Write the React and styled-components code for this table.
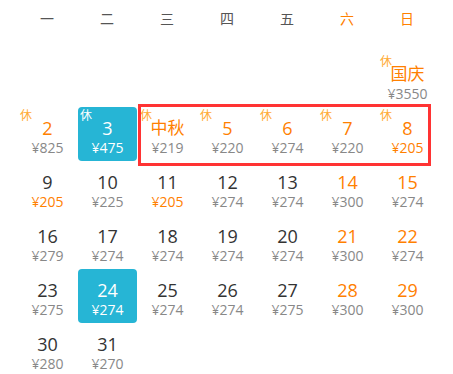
import React from 'react'
import styled, { createGlobalStyle } from 'styled-components'

const GlobalStyle = createGlobalStyle`
  body {
    margin: 0;
    background: #fff;
    font-family: "Open Sans", "Noto Sans CJK SC", sans-serif;
  }
`

const Wrapper = styled.div`
  position: relative;
  width: 453px;
  height: 374px;
  overflow: hidden;
  padding-left: 17px;
  box-sizing: border-box;
`
const WeekHead = styled.div`
  display: grid;
  grid-template-columns: repeat(7, 60px);
  height: 36px;
  margin-bottom: 17px;
`
const WeekDay = styled.div`
  text-align: center;
  line-height: 36px;
  font-size: 14px;
  font-family: "Noto Sans CJK SC", sans-serif;
  color: ${p => (p.$weekend ? '#ff8000' : '#555')};
`
const Grid = styled.div`
  display: grid;
  grid-template-columns: repeat(7, 60px);
  grid-auto-rows: 54px;
`
const Cell = styled.div`
  position: relative;
  margin-left: 1px;
  display: flex;
  flex-direction: column;
  align-items: center;
  padding-top: 9px;
  border-radius: 4px;
  background: ${p => (p.$selected ? '#26b5d5' : 'transparent')};
`
const Day = styled.div`
  font-size: 18px;
  line-height: 24px;
  color: ${p => (p.$selected ? '#fff' : p.$holiday ? '#ff8000' : '#333')};
`
const Label = styled(Day)`
  font-size: 17px;
  line-height: 22px;
  margin-bottom: 2px;
  font-family: "Noto Sans CJK SC", sans-serif;
`
const Price = styled.div`
  font-size: 14px;
  line-height: 16px;
  color: ${p => (p.$selected ? '#fff' : p.$low ? '#ff8000' : '#888')};
`
const Rest = styled.span`
  position: absolute;
  top: 1px;
  left: 2px;
  font-size: 12px;
  line-height: 14px;
  font-family: "Noto Sans CJK SC", sans-serif;
  color: ${p => (p.$selected ? '#fff' : '#ffaa33')};
`
const Highlight = styled.div`
  position: absolute;
  left: 138px;
  top: 104px;
  width: 293px;
  height: 62px;
  box-sizing: border-box;
  border: 3px solid #f33;
  pointer-events: none;
`

const week = ['一', '二', '三', '四', '五', '六', '日']

const days = [
  null, null, null, null, null, null,
  { label: '国庆', price: 3550, rest: true, holiday: true },
  { d: 2, price: 825, rest: true, holiday: true },
  { d: 3, price: 475, rest: true, selected: true },
  { label: '中秋', price: 219, rest: true, holiday: true },
  { d: 5, price: 220, rest: true, holiday: true },
  { d: 6, price: 274, rest: true, holiday: true },
  { d: 7, price: 220, rest: true, holiday: true },
  { d: 8, price: 205, rest: true, holiday: true, low: true },
  { d: 9, price: 205, low: true },
  { d: 10, price: 225 },
  { d: 11, price: 205, low: true },
  { d: 12, price: 274 },
  { d: 13, price: 274 },
  { d: 14, price: 300, holiday: true },
  { d: 15, price: 274, holiday: true },
  { d: 16, price: 279 },
  { d: 17, price: 274 },
  { d: 18, price: 274 },
  { d: 19, price: 274 },
  { d: 20, price: 274 },
  { d: 21, price: 300, holiday: true },
  { d: 22, price: 274, holiday: true },
  { d: 23, price: 275 },
  { d: 24, price: 274, selected: true },
  { d: 25, price: 274 },
  { d: 26, price: 274 },
  { d: 27, price: 275 },
  { d: 28, price: 300, holiday: true },
  { d: 29, price: 300, holiday: true },
  { d: 30, price: 280 },
  { d: 31, price: 270 },
]

const App = () => (
  <Wrapper>
    <GlobalStyle />
    <WeekHead>
      {week.map((w, i) => (
        <WeekDay key={w} $weekend={i > 4}>{w}</WeekDay>
      ))}
    </WeekHead>
    <Grid>
      {days.map((c, i) =>
        c ? (
          <Cell key={i} $selected={c.selected}>
            {c.rest && <Rest $selected={c.selected}>休</Rest>}
            {c.label
              ? <Label $holiday>{c.label}</Label>
              : <Day $holiday={c.holiday} $selected={c.selected}>{c.d}</Day>}
            <Price $low={c.low} $selected={c.selected}>¥{c.price}</Price>
          </Cell>
        ) : <div key={i} />
      )}
    </Grid>
    <Highlight />
  </Wrapper>
)

export default App
